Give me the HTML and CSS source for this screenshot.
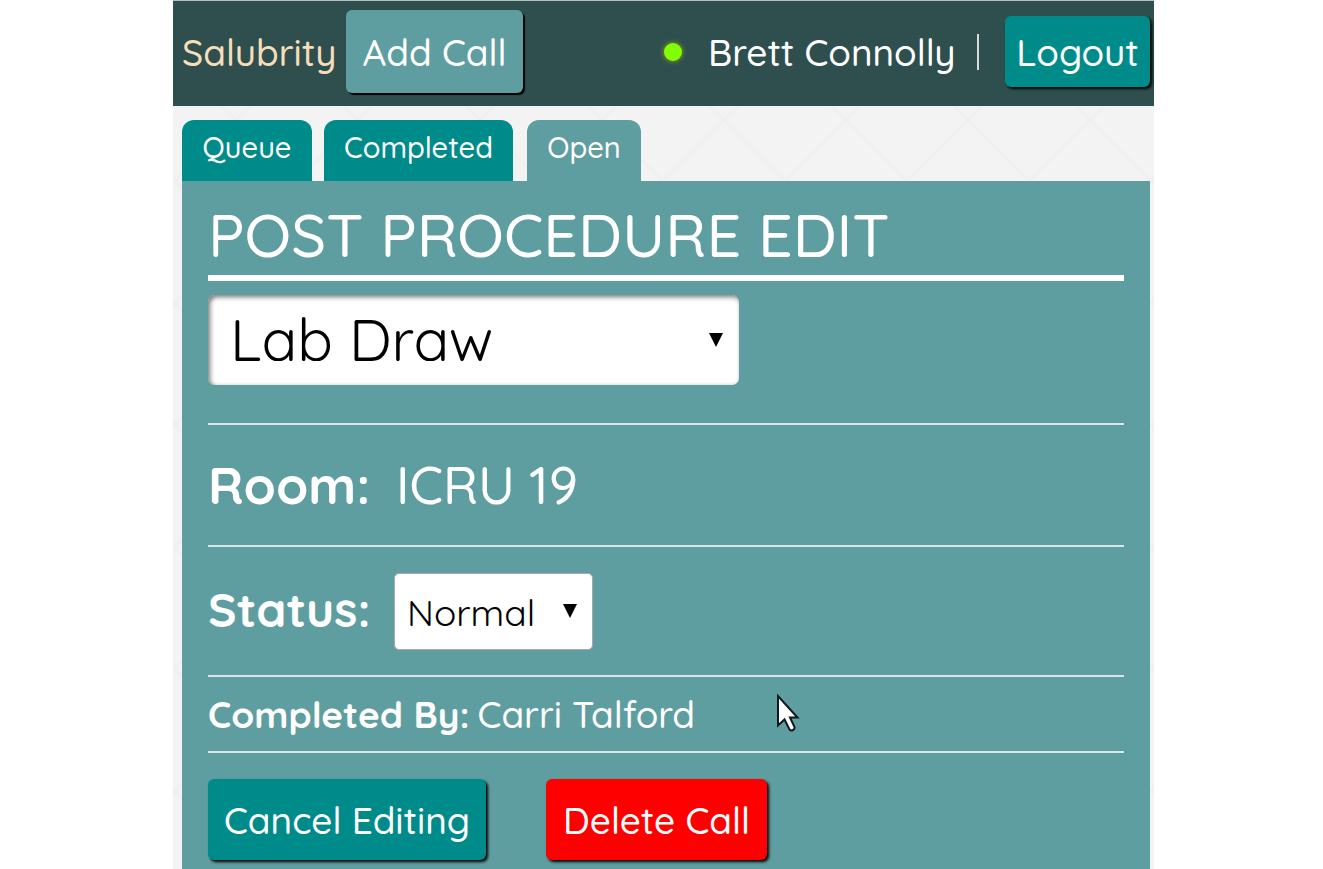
FILE: index.html
```html
<!DOCTYPE html>
<html lang="en">
<head>
<meta charset="utf-8">
<meta name="viewport" content="width=device-width, initial-scale=1">
<title>Salubrity</title>
<link rel="stylesheet" href="styles.css">
</head>
<body>
<div class="app">
  <header class="topbar">
    <a class="brand" href="#">Salubrity</a>
    <button class="btn btn-add" type="button">Add Call</button>
    <div class="account">
      <span class="online-dot"></span>
      <span class="user-name">Brett Connolly</span>
      <span class="divider"></span>
      <button class="btn btn-logout" type="button">Logout</button>
    </div>
  </header>
  <main class="content">
    <nav class="tabs">
      <a class="tab tab-queue" href="#">Queue</a>
      <a class="tab tab-completed" href="#">Completed</a>
      <a class="tab tab-open" href="#">Open</a>
    </nav>
    <form class="panel">
      <h1 class="title">POST PROCEDURE EDIT</h1>
      <div class="procedure">
        <span class="select-wrap select-large">
          <select aria-label="Procedure"><option>Lab Draw</option></select>
        </span>
      </div>
      <div class="row row-room"><strong>Room:</strong><span>ICRU 19</span></div>
      <div class="row row-status">
        <label for="status">Status:</label>
        <span class="select-wrap select-small">
          <select id="status"><option>Normal</option></select>
        </span>
      </div>
      <div class="row row-completed"><strong>Completed By:</strong><span>Carri Talford</span></div>
      <div class="actions">
        <button class="btn btn-cancel" type="button">Cancel Editing</button>
        <button class="btn btn-delete" type="button">Delete Call</button>
      </div>
    </form>
  </main>
</div>
<svg class="pointer" width="24" height="39" viewBox="0 0 24 39" aria-hidden="true">
  <path d="M2 2v29.500l6.500-6 5 10q1.500 1.500 3.500.5t1.500-3l-4.500-9.500h7.500z" fill="#fff" stroke="#101820" stroke-width="2"/>
</svg>
</body>
</html>
```
FILE: styles.css
```css
* { box-sizing: border-box; }

body {
  margin: 0;
  padding: 0 169px 0 173px;
  background: #fff;
  color: #fff;
  font-family: Quicksand, Lato, "Open Sans", sans-serif;
  font-size: 37px;
  font-weight: 500;
  line-height: 44px;
}

.app {
  min-height: 100vh;
  display: flex;
  flex-direction: column;
  border-top: 1px solid #b5c1c1;
  background-color: #f3f3f3;
  background-image:
    linear-gradient(45deg, transparent 49%, #f0f0f0 49%, #f0f0f0 51%, transparent 51%),
    linear-gradient(-45deg, transparent 49%, #f0f0f0 49%, #f0f0f0 51%, transparent 51%);
  background-size: 122px 122px;
  background-position: 2px 58px;
}

.topbar {
  display: flex;
  align-items: center;
  height: 105px;
  padding: 0 4px 4px 9px;
  background: #2f4f4f;
}

.brand {
  width: 164px;
  color: #f5deb9;
  text-decoration: none;
}

.btn {
  border: 0;
  border-radius: 6px;
  padding: 0;
  color: #fff;
  background: #008b8b;
  font: inherit;
  white-space: nowrap;
  box-shadow: 2px 2px 3px #000;
}

.btn-add {
  width: 177px;
  height: 83px;
  background: #5f9ea0;
  box-shadow: 2px 2px 1px #000;
}

.account {
  display: flex;
  align-items: center;
  margin-left: auto;
}

.online-dot {
  width: 18px;
  height: 18px;
  margin-right: 26px;
  border-radius: 50%;
  background: #7fff00;
  box-shadow: 0 0 5px #a0b000;
}

.user-name { width: 269px; }

.divider {
  width: 2px;
  height: 36px;
  margin-right: 26px;
  background: #d5dcdc;
}

.btn-logout {
  width: 145px;
  height: 71px;
}

.content {
  flex: 1;
  display: flex;
  flex-direction: column;
  padding: 14px 4px 0 9px;
}

.tabs { display: flex; }

.tab {
  height: 61px;
  padding-top: 8px;
  border-radius: 12px 12px 0 0;
  background: #008b8b;
  color: #fff;
  font-size: 29px;
  line-height: 38px;
  text-align: center;
  text-decoration: none;
}

.tab-queue { width: 130px; margin-right: 12px; }
.tab-completed { width: 189px; margin-right: 14px; }
.tab-open { width: 114px; background: #5f9ea0; }

.panel {
  flex: 1;
  padding: 16px 26px 9px;
  background: #5f9ea0;
}

.title {
  margin: 0;
  padding-bottom: 4px;
  border-bottom: 6px solid #fff;
  font-size: 61px;
  font-weight: 500;
  line-height: 74px;
}

.procedure {
  padding: 14px 0 38px;
  border-bottom: 2px solid #d8e6e7;
}

.select-wrap {
  position: relative;
  display: block;
  font-weight: 400;
}

.select-wrap::after {
  content: "";
  position: absolute;
  top: 50%;
  right: 16px;
  width: 14px;
  height: 14px;
  margin-top: -7px;
  background: #000;
  clip-path: polygon(0 0, 100% 0, 50% 100%);
  pointer-events: none;
}

.select-wrap select {
  appearance: none;
  display: block;
  width: 100%;
  border: 1px solid #a8a8a8;
  border-radius: 5px;
  background: #fff;
  color: #000;
  font: inherit;
}

.select-large {
  width: 531px;
  font-size: 59px;
}

.select-large select {
  height: 90px;
  padding: 0 22px 2px;
  border: 0;
  border-radius: 7px;
  box-shadow: inset 2px 2px 5px #777;
}

.select-small { width: 199px; }
.select-small select { height: 77px; padding: 2px 12px 0; }

.row {
  display: flex;
  align-items: center;
  border-bottom: 2px solid #d8e6e7;
}

.row-room { height: 122px; font-size: 52px; }
.row-room strong { width: 188px; }
.row-status { height: 130px; }
.row-status label { width: 186px; padding-bottom: 4px; font-size: 48px; font-weight: 700; }
.row-completed { height: 76px; gap: 8px; }

.actions {
  display: flex;
  gap: 60px;
  padding-top: 26px;
}

.btn-cancel { width: 278px; height: 81px; }
.btn-delete { width: 221px; height: 81px; background: #f00; }

.pointer {
  position: absolute;
  left: 776px;
  top: 694px;
}
```
